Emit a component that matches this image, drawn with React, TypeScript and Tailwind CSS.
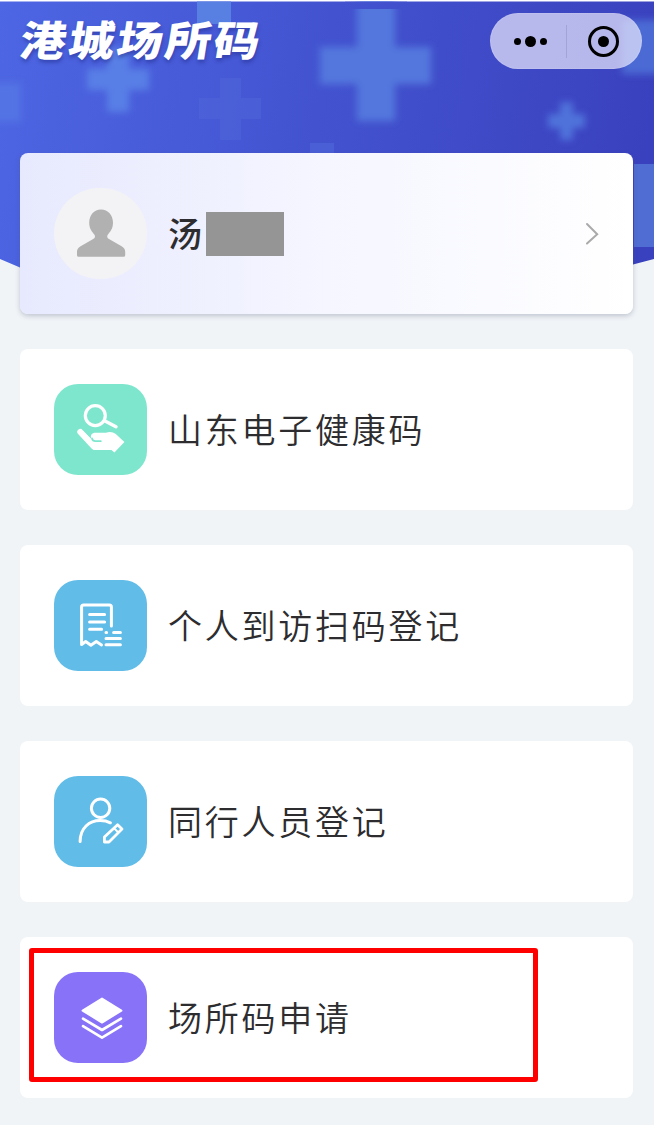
import type { ReactNode } from 'react'

interface MenuItem {
  label: string
  color: string
  icon: ReactNode
  highlighted?: boolean
}

function HealthIcon() {
  return (
    <svg viewBox="0 0 93 91" className="h-full w-full" fill="none" stroke="white" strokeLinecap="round" strokeLinejoin="round">
      <circle cx="41.3" cy="31.6" r="10" strokeWidth="3.2" />
      <path d="M50.5 36.8L62 42.8" strokeWidth="3.4" />
      <path d="M26.3 48L40 62.6" strokeWidth="6" />
      <path
        d="M28.8 46.5l8.6 8.8c-1.4-4.4.2-6.6 4.2-6.6h10.4c3.6-1.2 7-.8 9.8 1.4l8.6 8-10 10.4-3-2.6H40l-6-6z"
        fill="white"
        stroke="none"
      />
      <path d="M38 54.4c.4 2.2 1.6 2.8 3.4 2.8h5.4" stroke="#7fe6ce" strokeWidth="1.8" />
    </svg>
  )
}

function ReceiptIcon() {
  return (
    <svg viewBox="0 0 93 91" className="h-full w-full" fill="none" stroke="white" strokeWidth="3" strokeLinecap="round" strokeLinejoin="round">
      <path d="M57.4 46V27q0-2-2-2H29.6q-2 0-2 2V64.6l4.1-3.1 5.2 3.7 5.4-3.7 5.2 3.4" strokeWidth="3" />
      <path d="M35.6 34.5h15M35.6 42h15M35.6 49.3h12" />
      <path d="M52 52.4h.6M59.6 52.4h6.8M52 58.4h14.4M52 64.8h14.4" />
    </svg>
  )
}

function CompanionIcon() {
  return (
    <svg viewBox="0 0 93 91" className="h-full w-full" fill="none" stroke="white" strokeWidth="3" strokeLinecap="round" strokeLinejoin="round">
      <circle cx="46.6" cy="32.2" r="9.2" />
      <path d="M26.1 65.6C26.1 52 35.2 44.5 46.2 44.5c4.2 0 7.3.8 10.2 2.3" />
      <path d="M63.6 48.8l4.4 4.2L55 66H50.4v-4.9z" strokeWidth="2.8" />
      <path d="M60.2 52.4l3.9 3.8" strokeWidth="2" />
    </svg>
  )
}

function LayersIcon() {
  return (
    <svg viewBox="0 0 93 91" className="h-full w-full" fill="none" stroke="white" strokeLinecap="round" strokeLinejoin="round">
      <path d="M48 26.6L67.4 38.6 48 50.6 28.6 38.6z" fill="white" strokeWidth="2" />
      <path d="M29 46.6L48 58 67 46.6M29 54.2L48 65.6 67 54.2" strokeWidth="2.7" />
    </svg>
  )
}

const MENU: MenuItem[] = [
  { label: '山东电子健康码', color: 'bg-[#7fe6ce]', icon: <HealthIcon /> },
  { label: '个人到访扫码登记', color: 'bg-[#61bce8]', icon: <ReceiptIcon /> },
  { label: '同行人员登记', color: 'bg-[#61bce8]', icon: <CompanionIcon /> },
  { label: '场所码申请', color: 'bg-[#8872f8]', icon: <LayersIcon />, highlighted: true },
]

// Blue banner with the blurred medical crosses
function Banner() {
  return (
    <svg viewBox="0 0 654 275" className="absolute left-0 top-0 h-[275px] w-full">
      <defs>
        <linearGradient id="sky" x1="0" y1="0" x2="654" y2="110" gradientUnits="userSpaceOnUse">
          <stop offset="0" stopColor="#4d66e3" />
          <stop offset="0.5" stopColor="#4353d0" />
          <stop offset="1" stopColor="#3a41be" />
        </linearGradient>
        <clipPath id="edge">
          <path d="M0 1.5H654V259L633 264.5 600 275H50L20 267.5 0 259z" />
        </clipPath>
        <filter id="soft" x="-30%" y="-30%" width="160%" height="160%">
          <feGaussianBlur stdDeviation="3.8" />
        </filter>
      </defs>
      <rect width="654" height="2" fill="white" />
      <g clipPath="url(#edge)">
        <path d="M0 0H654V275H0z" fill="url(#sky)" />
        <path d="M197 0h34v24h-34z" fill="#587fe2" />
        <path d="M220 78h21v20h20v21h-20v21h-21v-21h-21V98h21z" fill="#5068da" opacity="0.5" />
        <path d="M310 143h24v20h-24z" fill="#5068da" opacity="0.6" />
        <path d="M634 164h20v83h-20z" fill="#506dd3" />
        <g filter="url(#soft)">
          <path d="M-20 83H21v39H-20z" fill="#5273e4" />
          <path d="M107 48h22v21h20v21h-20v22h-22V90H87V69h20z" fill="#587fe6" />
          <path d="M357 47V-5h38v52h36v37h-36v37h-38V84h-37V47z" fill="#5277dd" />
          <path d="M560 102h13v12h12v14h-12v12h-13v-12h-12v-14h12z" fill="#5072da" />
          <path d="M622 20h50v54h-50z" fill="#4c6bd4" />
        </g>
        <path d="M345 1.5h62V9h-62z" fill="url(#sky)" />
      </g>
    </svg>
  )
}

function Capsule() {
  return (
    <div className="flex h-14 w-[152px] items-center rounded-full border border-white/10 bg-[#f3f0ff]/67">
      <div className="flex w-[75px] items-center justify-center gap-1 pl-[3px]">
        <span className="h-[7px] w-[7px] rounded-full bg-black" />
        <span className="h-[11px] w-[11px] rounded-full bg-black" />
        <span className="h-[7px] w-[7px] rounded-full bg-black" />
      </div>
      <div className="h-[33px] w-px bg-[#a3a3d5]" />
      <div className="flex flex-1 justify-center pr-px">
        <div className="flex h-[31px] w-[31px] items-center justify-center rounded-full border-[3.5px] border-black">
          <span className="h-[11px] w-[11px] rounded-full bg-black" />
        </div>
      </div>
    </div>
  )
}

function ProfileCard() {
  return (
    <div className="flex h-[161px] items-center rounded-lg bg-linear-to-r from-[#e7e9fe] via-[#f5f6ff] to-white pl-[34px] pr-[34px] shadow-[0_2px_5px_rgba(70,80,110,0.28)]">
      <div className="h-[91px] w-[93px] shrink-0 rounded-full bg-[#f3f3f6]">
        <svg viewBox="0 0 93 91" className="h-full w-full">
          <path
            d="M47 21.5c7 0 12 5.6 12 13.2 0 6-2.9 9-5.1 11.8-1.3 2.1-.6 3.6 1.1 4.6l12.6 7.2c2.6 1.5 3.6 3 3.6 5.7v3.3q0 1.5-1.7 1.5H24.7q-1.7 0-1.7-1.5v-3.3c0-2.7 1-4.2 3.6-5.7l12.6-7.2c1.7-1 2.4-2.5 1.1-4.6-2.2-2.8-5.1-5.8-5.1-11.8 0-7.6 4.8-13.2 11.8-13.2z"
            fill="#b1b1b1"
          />
        </svg>
      </div>
      <span className="mb-0.5 ml-[21px] text-[34px] font-medium leading-none text-[#2d2d2f]">汤</span>
      <span className="ml-1 mt-px h-11 w-[78px] bg-[#959595]" />
      <svg viewBox="0 0 14 24" className="ml-auto h-6 w-3.5" fill="none" stroke="#aaaaaa" strokeWidth="2" strokeLinecap="round">
        <path d="M2 2L12.2 12.2 2 21.5" />
      </svg>
    </div>
  )
}

function MenuCard({ item }: { item: MenuItem }) {
  return (
    <div className="relative flex h-[161px] items-center rounded-lg bg-white pl-[34px]">
      <div className={`h-[91px] w-[93px] shrink-0 rounded-[24px] ${item.color}`}>{item.icon}</div>
      <span className="mb-0.5 ml-[21px] whitespace-nowrap text-[34px] font-[350] leading-none tracking-[2.75px] text-[#2d2d2f]">
        {item.label}
      </span>
      {item.highlighted && (
        <div className="absolute left-[9px] top-[11px] h-[134px] w-[509px] rounded-[3px] border-[5px] border-[#ff0000]" />
      )}
    </div>
  )
}

export default function App() {
  return (
    <div className="relative h-[1125px] w-full overflow-hidden bg-[#f0f4f7] font-['Noto_Sans_CJK_SC',sans-serif]">
      <Banner />
      <div className="relative pl-5 pr-[21px]">
        <header className="-mr-[9px] flex h-[153px] items-start justify-between pt-[13px]">
          <h1 className="origin-left scale-y-90 -skew-x-[8deg] pl-px pt-[2px] text-[46px] font-black leading-[46px] tracking-[2.4px] text-white [text-shadow:1px_3px_4px_rgba(30,40,130,0.45)]">
            港城场所码
          </h1>
          <Capsule />
        </header>
        <main className="flex flex-col gap-[35px]">
          <ProfileCard />
          {MENU.map((item) => (
            <MenuCard key={item.label} item={item} />
          ))}
        </main>
      </div>
    </div>
  )
}
